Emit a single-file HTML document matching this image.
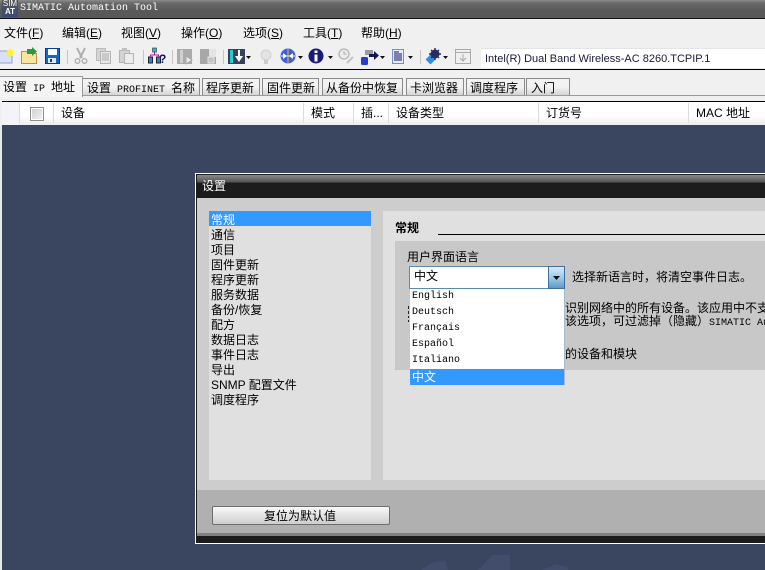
<!DOCTYPE html>
<html><head><meta charset="utf-8"><style>
html,body{margin:0;padding:0}
body{width:765px;height:570px;overflow:hidden;position:relative;background:#f0f0f0;font-family:"Liberation Sans","WenQuanYi Zen Hei","Noto Sans CJK SC",sans-serif;font-size:12px;color:#000}
.a{position:absolute;white-space:nowrap}
.m{font-family:"Liberation Mono",monospace;font-size:10px;white-space:pre}
.menu{top:25px;font-size:12px;line-height:16px}
.tab{top:78px;height:17px;line-height:19px;background:linear-gradient(#f2f2f2,#f2f2f2 50%,#d4d4d4);border:1px solid #8a8a8a;border-bottom:none;box-sizing:border-box;font-size:12px;padding-left:3px}
.hd{top:105px;font-size:12px;line-height:16px}
.sep{top:103px;width:1px;height:20px;background:#dcdcdc}
.li{left:211px;font-size:12px;line-height:15px;height:15px}
.dd{left:412px;font-size:10px;line-height:16px;height:16px;font-family:"Liberation Mono",monospace}
.ts{top:50px;width:1px;height:14px;background:#c4c4c4}
svg{position:absolute;overflow:visible}
</style></head><body>
<div class="a" style="left:0;top:0;width:765px;height:18px;background:linear-gradient(#8c8c8c,#6a6a6a 3px,#585858 60%,#585858);border-bottom:1px solid #111"></div>
<div class="a" style="left:2px;top:0;width:16px;height:17px;background:linear-gradient(#555,#3b4a78);color:#fff;font-size:8px;line-height:8px;overflow:hidden;text-align:center">SIM<br><b>AT</b></div>
<div class="a m" style="left:20px;top:2px;color:#fff;font-size:10px;line-height:14px">SIMATIC Automation Tool</div>

<div class="a menu" style="left:4px">文件(<u>F</u>)</div>
<div class="a menu" style="left:62px">编辑(<u>E</u>)</div>
<div class="a menu" style="left:121px">视图(<u>V</u>)</div>
<div class="a menu" style="left:181px">操作(<u>O</u>)</div>
<div class="a menu" style="left:243px">选项(<u>S</u>)</div>
<div class="a menu" style="left:303px">工具(<u>T</u>)</div>
<div class="a menu" style="left:361px">帮助(<u>H</u>)</div>

<!-- toolbar icons -->
<svg style="left:0;top:46px" width="480" height="22" viewBox="0 0 480 22">
<rect x="-1" y="5" width="13" height="12" fill="#d8e0fa" stroke="#8f9fe0"/><path d="M10 2l1 2.500 2.500-1-1 2.500 2.500 1-2.500 1 1 2.500-2.500-1-1 2.500-1-2.500-2.500 1 1-2.500-2.500-1 2.500-1-1-2.500 2.500 1z" fill="#ffef30"/>
<path d="M21.500 17.500v-12h5l2 2h8v10z" fill="#fbe49c" stroke="#b89440"/><path d="M27 3h5v-2l5 4.500-5 4.500v-2h-5z" fill="#2c9a3c"/>
<rect x="45.500" y="2.500" width="14" height="15" fill="#1565c8" stroke="#0b3a90"/><rect x="48" y="3" width="9" height="6" fill="#fff"/><rect x="48" y="12" width="8" height="5" fill="#dfe8f8"/><rect x="50" y="13" width="2" height="3" fill="#123a90"/>
<path d="M77 2l5 10M85 2l-5 10" stroke="#b0b0b0" stroke-width="2" fill="none"/><circle cx="77.500" cy="15" r="2.300" fill="none" stroke="#aaa" stroke-width="1.300"/><circle cx="84.500" cy="15" r="2.300" fill="none" stroke="#aaa" stroke-width="1.300"/>
<rect x="96.500" y="2.500" width="9" height="12" fill="#d4d4d4" stroke="#bbb"/><rect x="100.500" y="5.500" width="10" height="12" fill="#e8e8e8" stroke="#b4b4b4"/><path d="M102 8h7M102 10h7M102 12h7M102 14h7" stroke="#aaa"/>
<rect x="119.500" y="4.500" width="10" height="12" fill="#d4d4d4" stroke="#b4b4b4"/><rect x="122" y="2" width="5" height="3" fill="#c0c0c0"/><rect x="124.500" y="7.500" width="9" height="10" fill="#ececec" stroke="#b4b4b4"/>
<rect x="152.500" y="2" width="4" height="4" fill="#26b8c8" stroke="#333" stroke-width=".6"/><rect x="148.500" y="11" width="4" height="6" fill="#2a8ac0" stroke="#223"/><rect x="156.500" y="11" width="4" height="6" fill="#2a8ac0" stroke="#223"/><path d="M154.500 6v3M150.500 11v-2h8v2" stroke="#a020a0" fill="none"/>
<text x="159" y="17" font-family="Liberation Sans" font-weight="bold" font-size="12" fill="#14145a">?</text>
<rect x="177" y="3" width="15" height="15" fill="#ababab"/><rect x="180" y="4" width="3" height="13" fill="#d0d0d0"/><path d="M186 10l6 4-6 4z" fill="#ececec" stroke="#aaa"/>
<rect x="200" y="3" width="16" height="15" fill="#a8a8a8"/><rect x="209" y="3" width="7" height="8" fill="#e4e4e4"/><rect x="208" y="11" width="6" height="6" fill="#c4c4c4" stroke="#e4e4e4"/>
<rect x="228" y="3" width="17" height="15" fill="#33435c"/><rect x="230" y="4" width="3" height="13" fill="#2cc8d0"/><path d="M239 4v8" stroke="#fff" stroke-width="2"/><path d="M235 10h8l-4 6z" fill="#fff"/>
<path d="M246 10h5l-2.500 3z" fill="#111"/>
<circle cx="266" cy="9" r="5" fill="#e4e4e4" stroke="#d0d0d0"/><rect x="264" y="14" width="4" height="4" fill="#ccc"/>
<circle cx="288" cy="10" r="7.500" fill="#4060d8"/><path d="M281 10h14" stroke="#fff"/><path d="M283 7l4 3-4 3M293 7l-4 3 4 3" fill="#fff"/><path d="M288 3v14" stroke="#f0c020"/>
<path d="M298 10h5l-2.500 3z" fill="#111"/>
<circle cx="316" cy="10" r="7.500" fill="#1a1a78"/><rect x="314.500" y="4.500" width="3" height="2.500" fill="#fff"/><rect x="314.500" y="8.500" width="3" height="7" fill="#fff"/>
<path d="M328 10h5l-2.500 3z" fill="#111"/>
<circle cx="344" cy="8" r="5" fill="#ececec" stroke="#b4b4b4" stroke-width="1.300"/><path d="M344 5v3h2.500" stroke="#aaa" fill="none"/><path d="M347 17l6-6" stroke="#c4c4c4" stroke-width="2"/>
<rect x="361" y="11" width="7" height="8" rx="1.500" fill="#2040c8"/><rect x="365" y="4" width="8" height="5" fill="#9a9aa0"/><path d="M369 8h5v-3l5 4.500-5 4.500v-3h-5z" fill="#14145a"/>
<path d="M380 10h5l-2.500 3z" fill="#111"/>
<rect x="392.500" y="3.500" width="11" height="14" fill="#e4eafc" stroke="#7c88d8"/><path d="M394 6h5M394 8h8M394 10h8M394 12h8M394 14h8" stroke="#14145a"/>
<path d="M408 10h5l-2.500 3z" fill="#111"/>
<rect x="427" y="10" width="7" height="7" fill="#2a90e8" transform="rotate(45 430.500 13.500)"/>
<circle cx="435" cy="8" r="4.500" fill="#2a2a60"/><circle cx="435" cy="8" r="1.500" fill="#667"/><path d="M435 2v12M429 8h12M431 4l8 8M439 4l-8 8" stroke="#2a2a60" stroke-width="1.400"/>
<path d="M443 10h5l-2.500 3z" fill="#111"/>
<rect x="455.500" y="3.500" width="15" height="14" fill="#efefef" stroke="#aaa"/><path d="M456 6.500h14" stroke="#aaa"/><path d="M463 8v7M460 12l3 3 3-3" stroke="#aaa" fill="none"/>
</svg>
<div class="a ts" style="left:67px"></div><div class="a ts" style="left:143px"></div><div class="a ts" style="left:172px"></div><div class="a ts" style="left:223px"></div><div class="a ts" style="left:420px"></div>

<div class="a" style="left:481px;top:48px;width:284px;height:19px;background:#fff;border-top:1px solid #e4e4e4"></div>
<div class="a" style="left:485px;top:51px;font-size:11px;line-height:16px;color:#1a1a3a">Intel(R) Dual Band Wireless-AC 8260.TCPIP.1</div>
<div class="a" style="left:0;top:69px;width:765px;height:1px;background:#000"></div>

<!-- tabs -->
<div class="a" style="left:82px;top:95px;width:683px;height:1px;background:#9a9a9a"></div>
<div class="a tab" style="left:82px;width:118px;padding-left:4px">设置<span class="m"> PROFINET </span>名称</div>
<div class="a tab" style="left:202px;width:58px">程序更新</div>
<div class="a tab" style="left:262px;width:57px;padding-left:4px">固件更新</div>
<div class="a tab" style="left:322px;width:81px">从备份中恢复</div>
<div class="a tab" style="left:406px;width:58px">卡浏览器</div>
<div class="a tab" style="left:466px;width:59px">调度程序</div>
<div class="a tab" style="left:526px;width:44px;padding-left:4px">入门</div>
<div class="a" style="left:0;top:76px;width:83px;height:21px;background:#f4f4f4;border-top:1px solid #9a9a9a;border-right:1px solid #9a9a9a;box-sizing:border-box;line-height:20px;padding-left:3px">设置<span class="m"> IP </span>地址</div>

<!-- table -->
<div class="a" style="left:2px;top:101px;width:763px;height:1px;background:#000"></div>
<div class="a" style="left:2px;top:102px;width:763px;height:23px;background:linear-gradient(#fff,#fff 60%,#ececec)"></div>
<div class="a" style="left:2px;top:102px;width:17px;height:23px;background:#f4f4f8"></div>
<div class="a" style="left:30px;top:107px;width:12px;height:12px;border:1px solid #8e8e8e;background:linear-gradient(135deg,#d0d0d0,#f2f2f2);box-shadow:inset 0 0 0 1px #fff"></div>
<div class="a sep" style="left:19px"></div><div class="a sep" style="left:53px"></div><div class="a sep" style="left:303px"></div><div class="a sep" style="left:353px"></div><div class="a sep" style="left:388px"></div><div class="a sep" style="left:538px"></div><div class="a sep" style="left:688px"></div>
<div class="a hd" style="left:61px">设备</div>
<div class="a hd" style="left:311px">模式</div>
<div class="a hd" style="left:361px">插...</div>
<div class="a hd" style="left:396px">设备类型</div>
<div class="a hd" style="left:546px">订货号</div>
<div class="a hd" style="left:696px">MAC 地址</div>

<!-- dark bg -->
<div class="a" style="left:0;top:125px;width:765px;height:445px;background:#3a4560"></div>
<div class="a" style="left:0;top:125px;width:2px;height:445px;background:#e8e8e8"></div>
<svg style="left:0;top:540px" width="765" height="30"><path d="M421 30l10-7 14-3 3 10zM478 30l14-15h18v15zM542 30l14-6 12 4v2z" fill="#424c6b"/></svg>

<!-- dialog -->
<div class="a" style="left:195px;top:173px;width:570px;height:371px;background:#3a4560;border:solid #fff;border-width:1px 0 1px 1px;box-sizing:border-box"></div>
<div class="a" style="left:196px;top:174px;width:569px;height:369px;background:#1c1c1c"></div>
<div class="a" style="left:197px;top:175px;width:568px;height:22px;background:linear-gradient(#8a8a8a,#555 7px,#1c1c1c 8px)"></div>
<div class="a" style="left:202px;top:178px;color:#fff;font-size:12px;line-height:16px">设置</div>
<div class="a" style="left:197px;top:198px;width:568px;height:292px;background:#cdcdcd"></div>
<div class="a" style="left:197px;top:490px;width:568px;height:46px;background:#b0b0b0;border-bottom:3px solid #808080;box-sizing:border-box"></div>
<div class="a" style="left:212px;top:506px;width:178px;height:19px;box-sizing:border-box;border:1px solid #6e6e6e;border-radius:2px;background:linear-gradient(#f8f8f8,#e4e4e4 50%,#cdcdcd);text-align:center;line-height:18px;font-size:12px;padding-right:2px">复位为默认值</div>

<!-- left list -->
<div class="a" style="left:209px;top:211px;width:162px;height:269px;background:#e0e0e0"></div>
<div class="a" style="left:209px;top:211px;width:162px;height:15px;background:#3399ff"></div>
<div class="a li" style="top:213px;color:#fff">常规</div>
<div class="a li" style="top:228px">通信</div>
<div class="a li" style="top:243px">项目</div>
<div class="a li" style="top:258px">固件更新</div>
<div class="a li" style="top:273px">程序更新</div>
<div class="a li" style="top:288px">服务数据</div>
<div class="a li" style="top:303px">备份/恢复</div>
<div class="a li" style="top:318px">配方</div>
<div class="a li" style="top:333px">数据日志</div>
<div class="a li" style="top:348px">事件日志</div>
<div class="a li" style="top:363px">导出</div>
<div class="a li" style="top:378px">SNMP 配置文件</div>
<div class="a li" style="top:393px">调度程序</div>

<!-- right panel -->
<div class="a" style="left:383px;top:211px;width:382px;height:269px;background:#e0e0e0"></div>
<div class="a" style="left:395px;top:220px;font-weight:bold;font-size:12px;line-height:16px">常规</div>
<div class="a" style="left:438px;top:234px;width:327px;height:1px;background:#000"></div>
<div class="a" style="left:395px;top:241px;width:370px;height:129px;background:#c8c8c8"></div>
<div class="a" style="left:407px;top:249px;line-height:16px">用户界面语言</div>
<div class="a" style="left:572px;top:269px;line-height:16px">选择新语言时，将清空事件日志。</div>
<div class="a" style="left:565px;top:301px;line-height:15px;font-size:12px">识别网络中的所有设备。该应用中不支持</div>
<div class="a" style="left:565px;top:314px;line-height:15px;font-size:12px">该选项，可过滤掉（隐藏）<span class="m">SIMATIC Au</span></div>
<div class="a" style="left:565px;top:346px;line-height:16px">的设备和模块</div>
<svg style="left:407px;top:306px" width="3" height="17"><path d="M1.500 0v3M1.500 5v3M1.500 10v2M1.500 14v2" stroke="#222"/></svg>

<!-- combobox -->
<div class="a" style="left:409px;top:266px;width:156px;height:23px;box-sizing:border-box;border:1px solid #5a8ab0;background:#fff;border-radius:1px"></div>
<div class="a" style="left:414px;top:268px;line-height:16px">中文</div>
<div class="a" style="left:548px;top:266px;width:17px;height:23px;box-sizing:border-box;border:1px solid #3f6f9a;background:linear-gradient(#d6e8f6,#a0cbe8 50%,#5d9cc8)"></div>
<svg style="left:548px;top:266px" width="17" height="23"><path d="M5 10h7l-3.500 4z" fill="#111"/></svg>
<div class="a" style="left:410px;top:289px;width:155px;height:96px;background:#fff;border-right:1px solid #a8b8d0;box-sizing:border-box"></div>
<div class="a" style="left:410px;top:369px;width:154px;height:16px;background:#3399ff"></div>
<div class="a dd" style="top:289px">English</div>
<div class="a dd" style="top:305px">Deutsch</div>
<div class="a dd" style="top:321px">Français</div>
<div class="a dd" style="top:337px">Español</div>
<div class="a dd" style="top:353px">Italiano</div>
<div class="a" style="left:412px;top:369px;height:16px;line-height:16px;color:#fff;font-size:12px">中文</div>
</body></html>
